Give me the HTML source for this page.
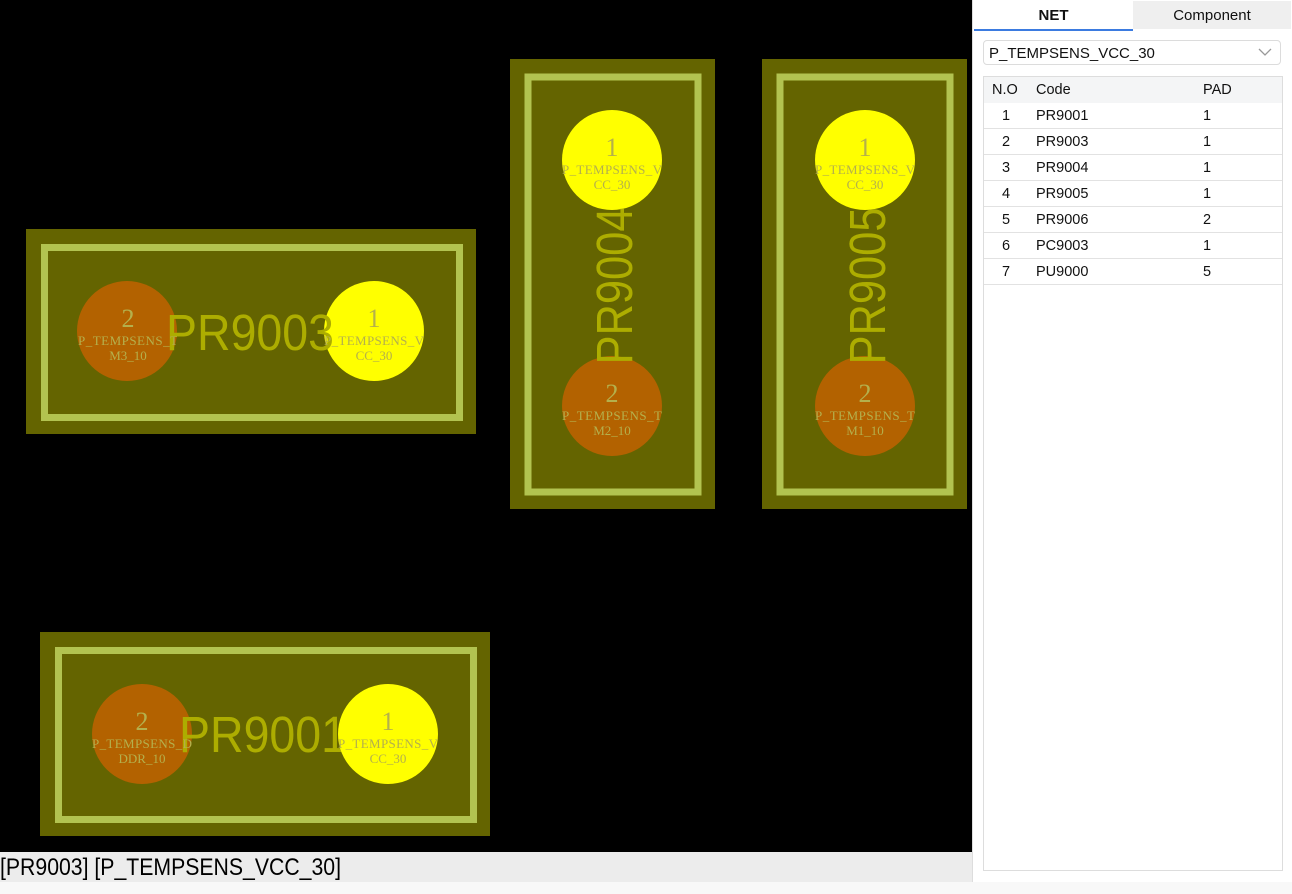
<!DOCTYPE html>
<html><head><meta charset="utf-8"><style>
html,body{margin:0;padding:0;width:1292px;height:894px;overflow:hidden;background:#f8f8f8;font-family:"Liberation Sans",sans-serif}
#cv{position:absolute;left:0;top:0;width:972px;height:852px;background:#000}
#st{position:absolute;left:0;top:852px;width:972px;height:30px;background:#ececec}
#pn{position:absolute;left:972px;top:0;width:320px;height:882px;background:#fff;border-left:1px solid #ddd;box-sizing:border-box}
.tab{position:absolute;top:1px;height:28px;line-height:29px;text-align:center;font-size:15px;color:#111}
#sel{position:absolute;left:10px;top:40px;width:298px;height:25px;border:1px solid #dcdcdc;border-radius:4px;font-size:15px;line-height:25px;padding-left:5px;box-sizing:border-box;color:#111}
#tb{position:absolute;left:10px;top:76px;width:300px;height:795px;border:1px solid #ddd;box-sizing:border-box}
.r{position:absolute;left:0;width:298px;height:26px;border-bottom:1px solid #e2e2e2;box-sizing:border-box;font-size:14.5px;line-height:26px;color:#111}
.r span{position:absolute}
</style></head><body>
<div id="cv"><svg width="972" height="852" xmlns="http://www.w3.org/2000/svg">
<defs>
<clipPath id="c1"><rect x="77" y="280" width="100" height="100"/></clipPath>
<clipPath id="c2"><rect x="324" y="280" width="100" height="100"/></clipPath>
<clipPath id="c3"><rect x="92" y="683" width="100" height="100"/></clipPath>
<clipPath id="c4"><rect x="338" y="683" width="100" height="100"/></clipPath>
<clipPath id="c5"><rect x="562" y="109" width="100" height="100"/></clipPath>
<clipPath id="c6"><rect x="562" y="356" width="100" height="100"/></clipPath>
<clipPath id="c7"><rect x="815" y="109" width="100" height="100"/></clipPath>
<clipPath id="c8"><rect x="815" y="356" width="100" height="100"/></clipPath>
</defs>
<g font-family="'Liberation Serif',serif" fill="#b4b04c" text-anchor="middle">
<rect x="26" y="229" width="450" height="205" fill="#646400"/>
<rect x="44.5" y="247.5" width="415" height="170" fill="none" stroke="#b2c350" stroke-width="7"/>
<circle cx="127" cy="331" r="50" fill="#b36200"/>
<circle cx="374" cy="331" r="50" fill="#ffff00"/>
<text x="250" y="350" font-family="'Liberation Sans',sans-serif" font-size="51" textLength="168" lengthAdjust="spacingAndGlyphs" fill="#adad00">PR9003</text>
<g clip-path="url(#c1)"><text x="128" y="327" font-size="26">2</text><text x="128" y="345" font-size="13" textLength="100">P_TEMPSENS_T</text><text x="128" y="360" font-size="13">M3_10</text></g>
<g clip-path="url(#c2)"><text x="374" y="327" font-size="26">1</text><text x="374" y="345" font-size="13" textLength="100">P_TEMPSENS_V</text><text x="374" y="360" font-size="13">CC_30</text></g>
<rect x="40" y="632" width="450" height="204" fill="#646400"/>
<rect x="58.5" y="650.5" width="415" height="169" fill="none" stroke="#b2c350" stroke-width="7"/>
<circle cx="142" cy="734" r="50" fill="#b36200"/>
<text x="263" y="752" font-family="'Liberation Sans',sans-serif" font-size="51" textLength="168" lengthAdjust="spacingAndGlyphs" fill="#adad00">PR9001</text>
<circle cx="388" cy="734" r="50" fill="#ffff00"/>
<g clip-path="url(#c3)"><text x="142" y="730" font-size="26">2</text><text x="142" y="748" font-size="13" textLength="100">P_TEMPSENS_D</text><text x="142" y="763" font-size="13">DDR_10</text></g>
<g clip-path="url(#c4)"><text x="388" y="730" font-size="26">1</text><text x="388" y="748" font-size="13" textLength="100">P_TEMPSENS_V</text><text x="388" y="763" font-size="13">CC_30</text></g>
<rect x="510" y="59" width="205" height="450" fill="#646400"/>
<rect x="528" y="77" width="170" height="415" fill="none" stroke="#b2c350" stroke-width="7"/>
<circle cx="612" cy="160" r="50" fill="#ffff00"/>
<circle cx="612" cy="406" r="50" fill="#b36200"/>
<text transform="translate(632,286) rotate(-90)" x="0" y="0" font-family="'Liberation Sans',sans-serif" font-size="51" textLength="157" lengthAdjust="spacingAndGlyphs" fill="#adad00">PR9004</text>
<g clip-path="url(#c5)"><text x="612" y="156" font-size="26">1</text><text x="612" y="174" font-size="13" textLength="100">P_TEMPSENS_V</text><text x="612" y="189" font-size="13">CC_30</text></g>
<g clip-path="url(#c6)"><text x="612" y="402" font-size="26">2</text><text x="612" y="420" font-size="13" textLength="100">P_TEMPSENS_T</text><text x="612" y="435" font-size="13">M2_10</text></g>
<rect x="762" y="59" width="205" height="450" fill="#646400"/>
<rect x="780" y="77" width="170" height="415" fill="none" stroke="#b2c350" stroke-width="7"/>
<circle cx="865" cy="160" r="50" fill="#ffff00"/>
<circle cx="865" cy="406" r="50" fill="#b36200"/>
<text transform="translate(885,286) rotate(-90)" x="0" y="0" font-family="'Liberation Sans',sans-serif" font-size="51" textLength="157" lengthAdjust="spacingAndGlyphs" fill="#adad00">PR9005</text>
<g clip-path="url(#c7)"><text x="865" y="156" font-size="26">1</text><text x="865" y="174" font-size="13" textLength="100">P_TEMPSENS_V</text><text x="865" y="189" font-size="13">CC_30</text></g>
<g clip-path="url(#c8)"><text x="865" y="402" font-size="26">2</text><text x="865" y="420" font-size="13" textLength="100">P_TEMPSENS_T</text><text x="865" y="435" font-size="13">M1_10</text></g>
</g>
</svg></div>
<div id="st"><svg width="972" height="30"><text x="0" y="23" font-family="'Liberation Sans',sans-serif" font-size="24" textLength="341" lengthAdjust="spacingAndGlyphs" fill="#000">[PR9003] [P_TEMPSENS_VCC_30]</text></svg></div>
<div id="pn">
<div class="tab" style="left:1px;width:159px;font-weight:bold;border-bottom:2px solid #3b7be0">NET</div>
<div class="tab" style="left:160px;width:158px;background:#efefef">Component</div>
<div id="sel">P_TEMPSENS_VCC_30<svg style="position:absolute;right:8px;top:7px" width="14" height="9"><path d="M1 1 L7 7 L13 1" fill="none" stroke="#999" stroke-width="1.3"/></svg></div>
<div id="tb">
<div class="r" style="top:0;background:#f4f5f6;border:none"><span style="left:8px">N.O</span><span style="left:52px">Code</span><span style="left:219px">PAD</span></div>
<div class="r" style="top:26px"><span style="left:18px">1</span><span style="left:52px">PR9001</span><span style="left:219px">1</span></div>
<div class="r" style="top:52px"><span style="left:18px">2</span><span style="left:52px">PR9003</span><span style="left:219px">1</span></div>
<div class="r" style="top:78px"><span style="left:18px">3</span><span style="left:52px">PR9004</span><span style="left:219px">1</span></div>
<div class="r" style="top:104px"><span style="left:18px">4</span><span style="left:52px">PR9005</span><span style="left:219px">1</span></div>
<div class="r" style="top:130px"><span style="left:18px">5</span><span style="left:52px">PR9006</span><span style="left:219px">2</span></div>
<div class="r" style="top:156px"><span style="left:18px">6</span><span style="left:52px">PC9003</span><span style="left:219px">1</span></div>
<div class="r" style="top:182px"><span style="left:18px">7</span><span style="left:52px">PU9000</span><span style="left:219px">5</span></div>
</div>
</div>
</body></html>
